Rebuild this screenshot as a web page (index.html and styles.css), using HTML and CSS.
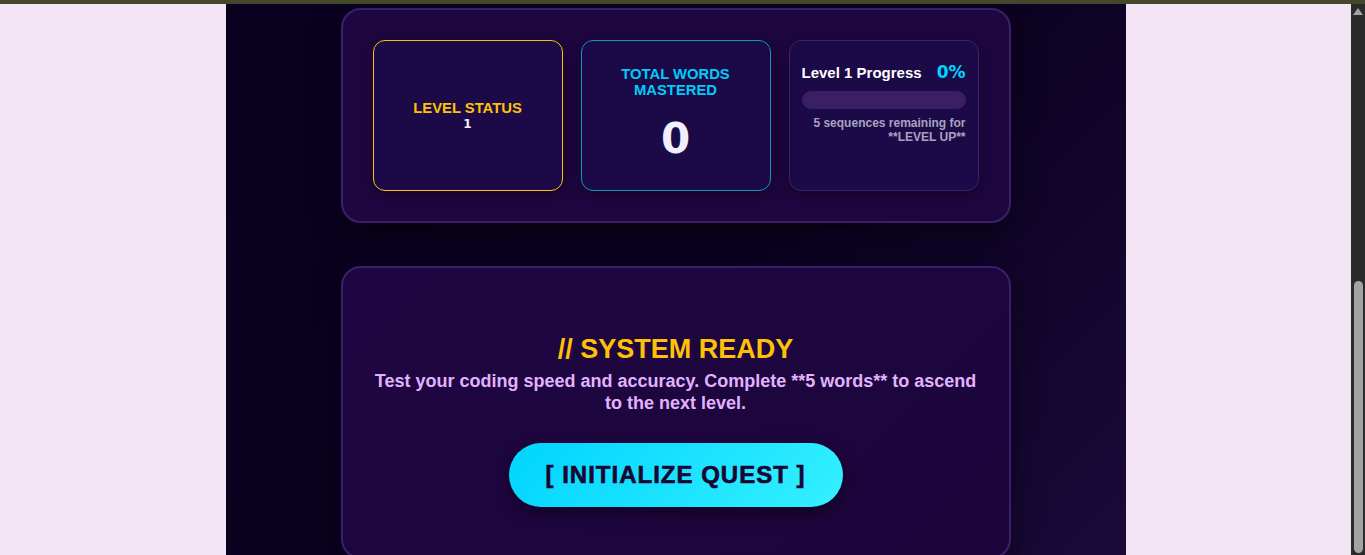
FILE: index.html
```html
<!DOCTYPE html>
<html lang="en">
<head>
    <meta charset="UTF-8">
    <title>Code Quest - Typing Trainer</title>
    <link rel="stylesheet" href="styles.css">
</head>
<body>
    <div class="topline"></div>

    <div class="window">
        <div class="page">
            <main class="app">
                <section class="panel stats-panel">
                    <div class="stat-card level-card">
                        <div class="stat-label">LEVEL STATUS</div>
                        <div class="level-value">1</div>
                    </div>
                    <div class="stat-card words-card">
                        <div class="stat-label">TOTAL WORDS MASTERED</div>
                        <div class="words-value">0</div>
                    </div>
                    <div class="stat-card progress-card">
                        <div class="progress-head">
                            <span class="progress-title">Level 1 Progress</span>
                            <span class="progress-pct">0%</span>
                        </div>
                        <div class="progress-bar">
                            <div class="progress-fill" style="width: 0%"></div>
                        </div>
                        <p class="progress-note">5 sequences remaining for **LEVEL UP**</p>
                    </div>
                </section>

                <section class="panel start-panel">
                    <h2 class="ready-title">// SYSTEM READY</h2>
                    <p class="ready-text">Test your coding speed and accuracy. Complete **5 words** to ascend to the next level.</p>
                    <button class="start-btn">[ INITIALIZE QUEST ]</button>
                </section>
            </main>
        </div>

        <div class="scrollbar">
            <span class="scroll-arrow"></span>
            <span class="scroll-thumb"></span>
        </div>
    </div>
</body>
</html>
```

FILE: styles.css
```css
body {
    margin: 0;
    height: 100vh;
    overflow: hidden;
    background: #f3e5f5;
    font-family: "Liberation Sans", Arial, sans-serif;
}
.topline {
    height: 4px;
    background: #45472c;
}
.window {
    display: flex;
    height: calc(100vh - 4px);
}
.page {
    flex: 1;
    overflow: hidden;
}
.app {
    width: 900px;
    min-height: 100%;
    margin: 0 auto;
    padding: 4px 0 40px;
    background: linear-gradient(135deg, #0a0120 0%, #0b0220 50%, #1a0a3a 100%);
}

/* scroll bar of the browser window */
.scrollbar {
    width: 14px;
    display: flex;
    flex-direction: column;
    align-items: center;
    background: #2b2b2b;
}
.scroll-arrow {
    margin-top: 4px;
    width: 0;
    height: 0;
    border-left: 5px solid transparent;
    border-right: 5px solid transparent;
    border-bottom: 7px solid #a3a3a3;
}
.scroll-thumb {
    margin-top: auto;
    margin-bottom: 2px;
    width: 9px;
    height: 272px;
    border-radius: 5px;
    background: #a3a3a3;
}

.panel {
    width: 670px;
    margin: 0 auto;
    box-sizing: border-box;
    background: #1e0640;
    border: 2px solid #3b1f6c;
    border-radius: 20px;
    box-shadow: 0 10px 30px rgba(0, 0, 0, 0.5);
}
.stats-panel {
    display: grid;
    grid-template-columns: repeat(3, 1fr);
    gap: 18px;
    padding: 30px;
    margin-bottom: 43px;
}
.stat-card {
    height: 151px;
    box-sizing: border-box;
    background: #1c0a48;
    border: 1px solid #3a2468;
    border-radius: 12px;
    box-shadow: 0 4px 14px rgba(0, 0, 0, 0.35);
}
.level-card,
.words-card {
    display: flex;
    flex-direction: column;
    justify-content: center;
    align-items: center;
    text-align: center;
    padding: 0 20px;
}
.level-card {
    border-color: #ffc107;
}
.words-card {
    justify-content: flex-start;
    padding-top: 25px;
    border-color: #0a96c0;
}
.stat-label {
    font-size: 14.8px;
    font-weight: bold;
}
.level-card .stat-label {
    color: #ffc107;
    margin-bottom: 1px;
}
.words-card .stat-label {
    color: #00ccf5;
    margin-bottom: 16px;
}
.level-value {
    font-family: "DejaVu Sans", sans-serif;
    font-size: 12px;
    font-weight: bold;
    color: #f4f2ff;
}
.words-value {
    font-family: "DejaVu Sans", sans-serif;
    font-size: 42px;
    font-weight: bold;
    color: #f0eeff;
}
.progress-card {
    padding: 21px 12px 0;
}
.progress-head {
    display: flex;
    justify-content: space-between;
    align-items: center;
}
.progress-title {
    font-size: 15px;
    font-weight: bold;
    color: #ffffff;
}
.progress-pct {
    font-family: "DejaVu Sans", sans-serif;
    font-size: 17px;
    font-weight: bold;
    color: #00d4ff;
}
.progress-bar {
    height: 18px;
    margin-top: 9px;
    background: #3a1f66;
    border-radius: 9px;
    overflow: hidden;
}
.progress-fill {
    height: 100%;
    background: #00d4ff;
}
.progress-note {
    margin: 7px 0 0;
    text-align: right;
    font-size: 12px;
    font-weight: bold;
    color: #a9a2bf;
}

.start-panel {
    padding: 66px 30px 50px;
    text-align: center;
    background: linear-gradient(135deg, #1f0642 0%, #1c053b 100%);
}
.ready-title {
    margin: 0;
    font-size: 27px;
    color: #ffc107;
}
.ready-text {
    margin: 5px 0 29px;
    font-size: 18px;
    line-height: 22px;
    font-weight: bold;
    color: #e1b3ff;
}
.start-btn {
    padding: 18px 37px;
    border: none;
    border-radius: 40px;
    background: linear-gradient(135deg, #00d4ff 0%, #35f0ff 100%);
    color: #1a0633;
    font-family: "Liberation Sans", Arial, sans-serif;
    font-size: 24px;
    font-weight: bold;
    letter-spacing: 1px;
    -webkit-text-stroke: 0.6px #1a0633;
    box-shadow: 0 6px 18px rgba(0, 0, 0, 0.45);
    cursor: pointer;
}
```
